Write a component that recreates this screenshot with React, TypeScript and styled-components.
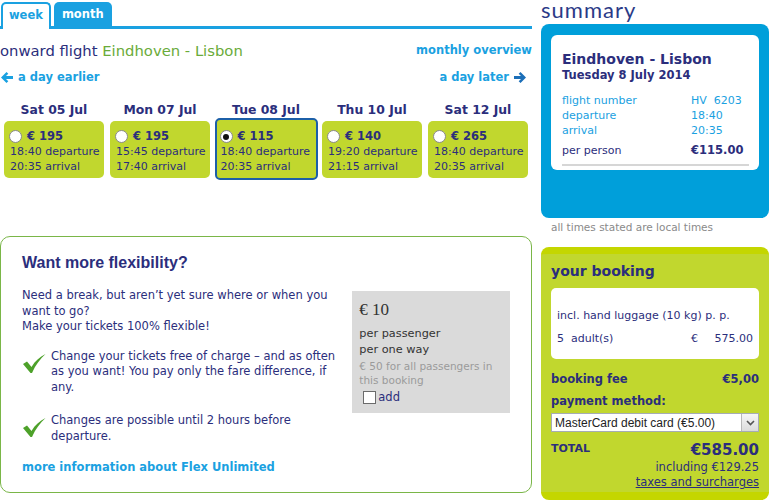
import styled, { createGlobalStyle } from "styled-components";

const GlobalStyle = createGlobalStyle`
  body {
    margin: 0;
    background: #ffffff;
    font-family: "DejaVu Sans", Verdana, sans-serif;
    color: #2b2e7c;
  }
`;

const navy = "#2b2e7c";
const sky = "#1aa1e1";
const lime = "#c1d72e";

const Page = styled.div`
  display: flex;
  width: 770px;
  height: 503px;
  overflow: hidden;
`;

const LeftColumn = styled.div`
  width: 532px;
  display: flex;
  flex-direction: column;
`;

const RightColumn = styled.div`
  width: 228px;
  margin-left: 9px;
  display: flex;
  flex-direction: column;
`;

/* ---------- tabs ---------- */

const TabBar = styled.div`
  display: flex;
  gap: 3px;
  padding: 2px 0 0 1px;
  border-bottom: 3px solid ${sky};
  height: 24px;
`;

const Tab = styled.div<{ $active?: boolean }>`
  box-sizing: border-box;
  height: ${(p) => (p.$active ? "27px" : "24px")};
  padding: 0 ${(p) => (p.$active ? "6px" : "8px")};
  display: flex;
  align-items: center;
  font-size: 11.5px;
  font-weight: bold;
  border-radius: 5px 5px 0 0;
  background: ${(p) => (p.$active ? "#ffffff" : sky)};
  color: ${(p) => (p.$active ? sky : "#ffffff")};
  border: ${(p) => (p.$active ? `2px solid ${sky}` : "none")};
  border-bottom: none;
  padding-bottom: ${(p) => (p.$active ? "3px" : "0")};
`;

/* ---------- route header ---------- */

const RouteRow = styled.div`
  display: flex;
  justify-content: space-between;
  align-items: center;
  margin-top: 11px;
  height: 20px;
`;

const RouteTitle = styled.div`
  font-size: 14.8px;
  color: ${navy};
  span {
    color: #6aab3a;
  }
`;

const BlueLink = styled.a`
  color: ${sky};
  font-weight: bold;
  font-size: 11.5px;
  text-decoration: none;
  display: inline-flex;
  align-items: center;
  gap: 5px;
`;

const NavRow = styled.div`
  display: flex;
  justify-content: space-between;
  align-items: center;
  margin-top: 9px;
  height: 16px;
  padding-left: 1px;
  padding-right: 6px;
`;

/* ---------- day picker ---------- */

const DayStrip = styled.div`
  display: flex;
  gap: 6px;
  margin-top: 17px;
  padding-left: 4px;
`;

const DayColumn = styled.div`
  width: 100px;
  display: flex;
  flex-direction: column;
  align-items: center;
`;

const DayLabel = styled.div`
  font-size: 12.4px;
  font-weight: bold;
  color: ${navy};
  height: 19px;
  line-height: 15px;
`;

const DayCard = styled.div<{ $selected?: boolean }>`
  box-sizing: border-box;
  width: ${(p) => (p.$selected ? "103px" : "100px")};
  height: ${(p) => (p.$selected ? "62px" : "57px")};
  margin-top: ${(p) => (p.$selected ? "-3px" : "0")};
  background: ${lime};
  border-radius: 5px;
  border: ${(p) => (p.$selected ? "2px solid #1c5fa8" : "none")};
  padding: ${(p) => (p.$selected ? "9px 0 0 4px" : "8px 0 0 6px")};
  font-size: 11px;
  line-height: 15px;
  color: ${navy};
  white-space: nowrap;
`;

const PriceLine = styled.div`
  display: flex;
  align-items: center;
  gap: 5px;
  font-weight: bold;
  font-size: 11.5px;
`;

const Radio = styled.span<{ $checked?: boolean }>`
  box-sizing: border-box;
  width: 13px;
  height: 13px;
  border-radius: 50%;
  border: 1px solid #8a8a8a;
  background: #ffffff;
  margin-left: -1px;
  display: inline-flex;
  align-items: center;
  justify-content: center;
  &::after {
    content: "";
    width: 6px;
    height: 6px;
    border-radius: 50%;
    background: ${(p) => (p.$checked ? "#111" : "transparent")};
  }
`;

/* ---------- flex offer ---------- */

const FlexPanel = styled.div`
  box-sizing: border-box;
  margin-top: 56px;
  height: 257px;
  border: 1px solid #7ab648;
  border-radius: 10px;
  padding: 15px 21px 0 21px;
`;

const FlexTitle = styled.h2`
  margin: 0;
  font-family: "Liberation Sans", Arial, sans-serif;
  font-size: 16px;
  font-weight: bold;
  color: ${navy};
  line-height: 22px;
`;

const FlexBody = styled.div`
  display: flex;
  margin-top: 14px;
`;

const FlexText = styled.div`
  width: 330px;
  font-size: 11.5px;
  line-height: 15.5px;
  color: ${navy};
`;

const Paragraph = styled.p`
  margin: 0;
`;

const CheckList = styled.ul`
  list-style: none;
  margin: 14px 0 0 0;
  padding: 0;
  display: flex;
  flex-direction: column;
  gap: 18px;
`;

const CheckItem = styled.li`
  display: flex;
  gap: 5px;
  svg {
    flex: none;
    margin-top: 4px;
  }
`;

const MoreLink = styled(BlueLink)`
  margin-top: 16px;
  display: block;
`;

const PriceBox = styled.div`
  box-sizing: border-box;
  width: 158px;
  height: 122px;
  margin-left: 1px;
  margin-top: 3px;
  background: #dadada;
  padding: 8px 7px 0 7px;
  font-size: 11.3px;
  line-height: 15.5px;
  color: #333333;
`;

const BoxPrice = styled.div`
  font-family: "Liberation Serif", "Times New Roman", serif;
  font-size: 17px;
  line-height: 22px;
  margin-bottom: 5px;
`;

const BoxNote = styled.div`
  color: #9a9a9a;
  font-size: 10.5px;
  line-height: 14px;
  margin-top: 2px;
`;

const AddRow = styled.label`
  display: flex;
  align-items: center;
  gap: 2px;
  margin-top: 3px;
  margin-left: 4px;
  color: ${navy};
  font-size: 11.5px;
`;

const CheckBox = styled.span`
  box-sizing: border-box;
  width: 13px;
  height: 13px;
  background: #ffffff;
  border: 1px solid #6b6b6b;
`;

/* ---------- summary ---------- */

const SummaryHeading = styled.h1`
  margin: 0;
  font-family: Lato, "Open Sans", sans-serif;
  font-weight: normal;
  font-size: 22px;
  line-height: 20px;
  padding-bottom: 4px;
  color: #2b3a87;
  letter-spacing: 1px;
`;

const BlueBox = styled.div`
  box-sizing: border-box;
  height: 194px;
  background: #009fda;
  border-radius: 8px;
  padding: 11px 10px;
`;

const WhiteCard = styled.div<{ $pad?: string }>`
  background: #ffffff;
  border-radius: 6px;
  padding: ${(p) => p.$pad || "0"};
`;

const BookingCard = styled(WhiteCard)`
  margin: 0 10px;
  padding: 0 6px;
  border-radius: 5px;
`;

const CardTitle = styled.div`
  font-size: 14px;
  font-weight: bold;
  color: ${navy};
  line-height: 18px;
`;

const CardDate = styled.div`
  font-size: 11.5px;
  font-weight: bold;
  color: ${navy};
  line-height: 15px;
`;

const InfoTable = styled.div`
  display: grid;
  grid-template-columns: 129px 1fr;
  font-size: 11px;
  line-height: 15px;
  color: ${sky};
  margin-top: 10px;
`;

const PerPerson = styled.div`
  display: grid;
  grid-template-columns: 129px 1fr;
  font-size: 11px;
  line-height: 15px;
  color: ${navy};
  margin-top: 5px;
  padding-bottom: 6px;
  border-bottom: 2px solid #d6d6d6;
  strong {
    font-size: 11.5px;
  }
`;

const LocalNote = styled.div`
  font-size: 10.5px;
  color: #8a8a8a;
  margin: 2px 0 0 10px;
  line-height: 14px;
`;

/* ---------- booking ---------- */

const BookingBox = styled.div`
  box-sizing: border-box;
  margin-top: 13px;
  height: 253px;
  background: ${lime};
  border-radius: 8px;
  border-top: 7px solid #c4d600;
  border-bottom: 8px solid #c4d600;
  display: flex;
  flex-direction: column;
  color: ${navy};
`;

const BookingTitle = styled.div`
  font-size: 14px;
  font-weight: bold;
  line-height: 18px;
  padding: 8px 10px 8px 10px;
`;

const LuggageLine = styled.div`
  font-size: 11px;
  line-height: 15px;
  padding-top: 20px;
`;

const AdultLine = styled.div`
  display: grid;
  grid-template-columns: 134px 20px 1fr;
  font-size: 11px;
  line-height: 15px;
  margin-top: 8px;
  padding-bottom: 13px;
  span:last-child {
    text-align: right;
  }
`;

const FeeRow = styled.div`
  display: flex;
  justify-content: space-between;
  font-size: 11.5px;
  font-weight: bold;
  padding: 13px 10px 0 10px;
  line-height: 15px;
`;

const Label = styled.div`
  font-size: 11.5px;
  font-weight: bold;
  padding: 7px 10px 0 10px;
  line-height: 15px;
`;

const Select = styled.div`
  box-sizing: border-box;
  margin: 4px 10px 0 10px;
  height: 19px;
  background: #ffffff;
  border: 1px solid #a5acb5;
  display: flex;
  align-items: center;
  justify-content: space-between;
  font-family: "Liberation Sans", Arial, sans-serif;
  font-size: 12px;
  color: #222;
  padding-left: 3px;
`;

const SelectButton = styled.span`
  box-sizing: border-box;
  width: 17px;
  height: 17px;
  background: linear-gradient(#f5f5f5, #dcdcdc);
  border-left: 1px solid #b8b8b8;
  display: flex;
  align-items: center;
  justify-content: center;
`;

const TotalBlock = styled.div`
  display: flex;
  justify-content: space-between;
  padding: 9px 10px 0 10px;
`;

const TotalLabel = styled.div`
  font-size: 11px;
  font-weight: bold;
  line-height: 15px;
`;

const TotalValues = styled.div`
  text-align: right;
  font-size: 11.5px;
  line-height: 15px;
  strong {
    display: block;
    font-size: 15px;
    line-height: 19px;
  }
  a {
    color: ${navy};
    text-decoration: underline;
  }
`;

const ArrowLeft = () => (
  <svg width="12" height="11" viewBox="0 0 12 11">
    <path d="M5.5 0 L0 5.5 L5.5 11 L7.3 9.2 L5 6.9 L12 6.9 L12 4.1 L5 4.1 L7.3 1.8 Z" fill={sky} />
  </svg>
);

const ArrowRight = () => (
  <svg width="12" height="11" viewBox="0 0 12 11">
    <path d="M6.5 0 L12 5.5 L6.5 11 L4.7 9.2 L7 6.9 L0 6.9 L0 4.1 L7 4.1 L4.7 1.8 Z" fill="#1c6fb8" />
  </svg>
);

const Tick = () => (
  <svg width="24" height="21" viewBox="0 0 24 21">
    <path d="M1 11 L5 8.5 L9.5 14 C13 8 17.5 4 23.5 1 C18 6 13.5 12 10 20 L8.5 20 Z" fill="#4da12a" />
  </svg>
);

const Chevron = () => (
  <svg width="9" height="6" viewBox="0 0 9 6">
    <path d="M1 1 L4.5 4.5 L8 1" stroke="#555" strokeWidth="1.6" fill="none" />
  </svg>
);

const days = [
  { label: "Sat 05 Jul", price: "€ 195", dep: "18:40", arr: "20:35" },
  { label: "Mon 07 Jul", price: "€ 195", dep: "15:45", arr: "17:40" },
  { label: "Tue 08 Jul", price: "€ 115", dep: "18:40", arr: "20:35", selected: true },
  { label: "Thu 10 Jul", price: "€ 140", dep: "19:20", arr: "21:15" },
  { label: "Sat 12 Jul", price: "€ 265", dep: "18:40", arr: "20:35" },
];

const App = () => {
  return (
    <>
      <GlobalStyle />
      <Page>
        <LeftColumn>
          <TabBar>
            <Tab $active>week</Tab>
            <Tab>month</Tab>
          </TabBar>

          <RouteRow>
            <RouteTitle>
              onward flight <span>Eindhoven - Lisbon</span>
            </RouteTitle>
            <BlueLink href="#">monthly overview</BlueLink>
          </RouteRow>

          <NavRow>
            <BlueLink href="#">
              <ArrowLeft /> a day earlier
            </BlueLink>
            <BlueLink href="#">
              a day later <ArrowRight />
            </BlueLink>
          </NavRow>

          <DayStrip>
            {days.map((d) => (
              <DayColumn key={d.label}>
                <DayLabel>{d.label}</DayLabel>
                <DayCard $selected={d.selected}>
                  <PriceLine>
                    <Radio $checked={d.selected} />
                    {d.price}
                  </PriceLine>
                  <div>{d.dep} departure</div>
                  <div>{d.arr} arrival</div>
                </DayCard>
              </DayColumn>
            ))}
          </DayStrip>

          <FlexPanel>
            <FlexTitle>Want more flexibility?</FlexTitle>
            <FlexBody>
              <FlexText>
                <Paragraph>
                  Need a break, but aren’t yet sure where or when you want to go?
                  <br />
                  Make your tickets 100% flexible!
                </Paragraph>
                <CheckList>
                  <CheckItem>
                    <Tick />
                    <span>
                      Change your tickets free of charge – and as often as you want! You pay only the
                      fare difference, if any.
                    </span>
                  </CheckItem>
                  <CheckItem>
                    <Tick />
                    <span>Changes are possible until 2 hours before departure.</span>
                  </CheckItem>
                </CheckList>
                <MoreLink href="#">more information about Flex Unlimited</MoreLink>
              </FlexText>
              <PriceBox>
                <BoxPrice>€ 10</BoxPrice>
                <div>per passenger</div>
                <div>per one way</div>
                <BoxNote>€ 50 for all passengers in this booking</BoxNote>
                <AddRow>
                  <CheckBox />
                  add
                </AddRow>
              </PriceBox>
            </FlexBody>
          </FlexPanel>
        </LeftColumn>

        <RightColumn>
          <SummaryHeading>summary</SummaryHeading>
          <BlueBox>
            <WhiteCard $pad="15px 10px 4px 11px">
              <CardTitle>Eindhoven - Lisbon</CardTitle>
              <CardDate>Tuesday 8 July 2014</CardDate>
              <InfoTable>
                <span>flight number</span>
                <span>HV&nbsp;&nbsp;6203</span>
                <span>departure</span>
                <span>18:40</span>
                <span>arrival</span>
                <span>20:35</span>
              </InfoTable>
              <PerPerson>
                <span>per person</span>
                <strong>€115.00</strong>
              </PerPerson>
            </WhiteCard>
          </BlueBox>
          <LocalNote>all times stated are local times</LocalNote>

          <BookingBox>
            <BookingTitle>your booking</BookingTitle>
            <BookingCard>
              <LuggageLine>incl. hand luggage (10 kg) p. p.</LuggageLine>
              <AdultLine>
                <span>5&nbsp;&nbsp;adult(s)</span>
                <span>€</span>
                <span>575.00</span>
              </AdultLine>
            </BookingCard>
            <FeeRow>
              <span>booking fee</span>
              <span>€5,00</span>
            </FeeRow>
            <Label>payment method:</Label>
            <Select>
              <span>MasterCard debit card (€5.00)</span>
              <SelectButton>
                <Chevron />
              </SelectButton>
            </Select>
            <TotalBlock>
              <TotalLabel>TOTAL</TotalLabel>
              <TotalValues>
                <strong>€585.00</strong>
                <div>including €129.25</div>
                <a href="#">taxes and surcharges</a>
              </TotalValues>
            </TotalBlock>
          </BookingBox>
        </RightColumn>
      </Page>
    </>
  );
};

export default App;
